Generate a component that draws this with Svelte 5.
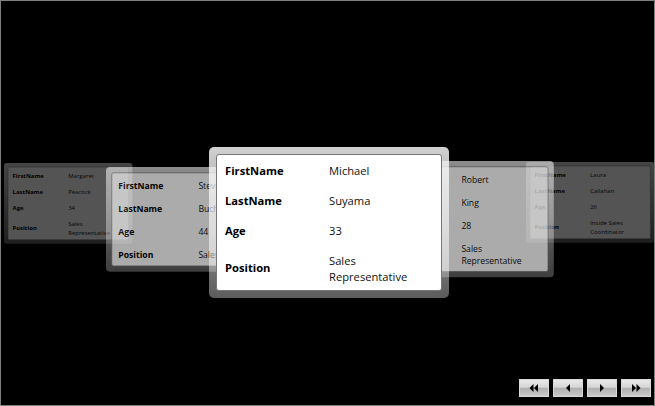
<script>
	const people = [
		{ id: 1, first: 'Margaret', last: 'Peacock', age: 34, position: 'Sales Representative', x: 4, y: 163, scale: 0.535, opacity: 0.33, z: 1 },
		{ id: 2, first: 'Laura', last: 'Callahan', age: 26, position: 'Inside Sales Coordinator', x: 526, y: 162, scale: 0.535, opacity: 0.33, z: 1 },
		{ id: 3, first: 'Steven', last: 'Buchanan', age: 44, position: 'Sales Manager', x: 106, y: 167, scale: 0.77, opacity: 0.67, z: 2 },
		{ id: 4, first: 'Robert', last: 'King', age: 28, position: 'Sales Representative', x: 369, y: 161, scale: 0.77, opacity: 0.67, z: 2 },
		{ id: 5, first: 'Michael', last: 'Suyama', age: 33, position: 'Sales Representative', x: 209, y: 147, scale: 1, opacity: 1, z: 3 }
	];
</script>

<div class="window">
	{#each people as p (p.id)}
		<div
			class="card"
			style="left: {p.x}px; top: {p.y}px; transform: scale({p.scale}); opacity: {p.opacity}; z-index: {p.z}"
		>
			<div class="details">
				<div class="label">FirstName</div>
				<div class="value">{p.first}</div>
				<div class="label">LastName</div>
				<div class="value">{p.last}</div>
				<div class="label">Age</div>
				<div class="value">{p.age}</div>
				<div class="label">Position</div>
				<div class="value">{p.position}</div>
			</div>
		</div>
	{/each}

	<div class="pager">
		<button aria-label="First">
			<svg width="10" height="8" viewBox="0 0 10 8"><path d="M4.500 0v8L0.500 4zM9 0v8L5 4z" /></svg>
		</button>
		<button aria-label="Previous">
			<svg width="10" height="8" viewBox="0 0 10 8"><path d="M7 0v8L3 4z" /></svg>
		</button>
		<button aria-label="Next">
			<svg width="10" height="8" viewBox="0 0 10 8"><path d="M3 0v8l4-4z" /></svg>
		</button>
		<button aria-label="Last">
			<svg width="10" height="8" viewBox="0 0 10 8"><path d="M1 0v8l4-4zM5.500 0v8l4-4z" /></svg>
		</button>
	</div>
</div>

<style>
	:global(body) {
		margin: 0;
		background: #000;
	}

	.window {
		position: relative;
		box-sizing: border-box;
		width: 655px;
		height: 406px;
		overflow: hidden;
		background: #000;
		border: 1px solid #7f7f7f;
		display: flex;
		flex-direction: column;
		justify-content: flex-end;
		font-family: 'Open Sans', 'Noto Sans', sans-serif;
	}

	.card {
		position: absolute;
		margin: -1px 0 0 -1px;
		box-sizing: border-box;
		width: 240px;
		padding: 7px;
		border-radius: 5px;
		transform-origin: top left;
		background: linear-gradient(rgba(255, 255, 255, 0.82), rgba(255, 255, 255, 0.36));
	}

	.details {
		display: grid;
		grid-template-columns: 104px 1fr;
		align-items: center;
		padding: 0 16px 0 8px;
		background: #fff;
		border: 1px solid #777;
		border-radius: 3px;
		font-size: 11.2px;
		line-height: 16px;
		color: #000;
	}

	.label {
		font-weight: 700;
		padding-top: 1px;
	}

	.value {
		box-sizing: border-box;
		min-height: 30px;
		padding: 8px 0 5px;
		color: #111;
	}

	.pager {
		display: flex;
		justify-content: flex-end;
		gap: 4px;
		padding: 0 3px 8px 0;
	}

	button {
		box-sizing: border-box;
		width: 30px;
		height: 18px;
		padding: 0;
		display: flex;
		align-items: center;
		justify-content: center;
		border: 1px solid #d8d8d8;
		background: linear-gradient(#e8e8e8 0%, #d6d6d6 45%, #b0b0b0 52%, #cacaca 100%);
	}

	button path {
		fill: #000;
	}
</style>
